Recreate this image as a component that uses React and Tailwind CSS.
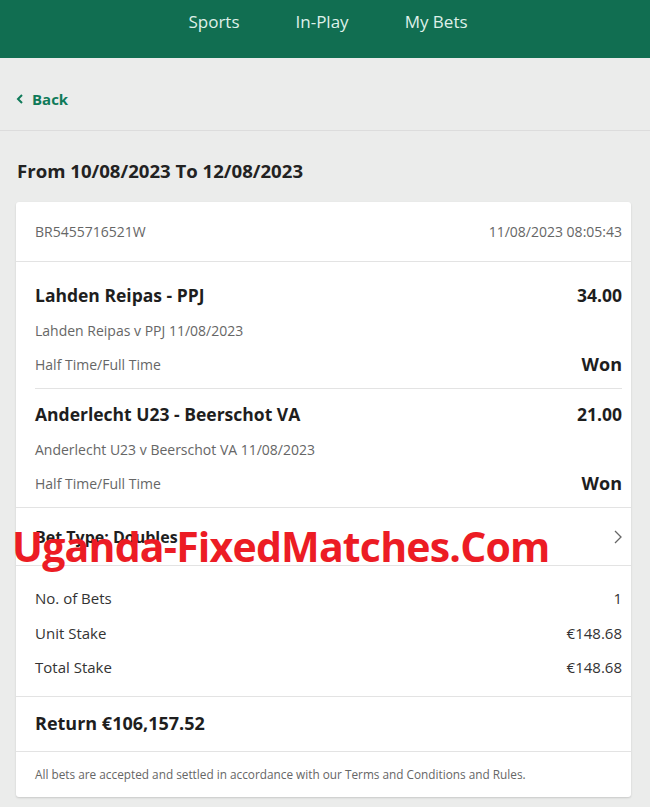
import React from "react";

const F = { fontFamily: '"Open Sans", "Noto Sans", sans-serif' };

function Row({ label, value }) {
  return (
    <div className="flex justify-between items-center h-[34.5px] text-[15px] text-[#333]">
      <span>{label}</span>
      <span>{value}</span>
    </div>
  );
}

function Selection({ title, odds, sub, border, top }) {
  return (
    <div className={"ml-[19px] mr-[9px] " + top + (border ? " border-b border-[#e3e3e3]" : "")}>
      <div className="flex justify-between items-center text-[17.5px] font-bold text-[#1e1e1e]">
        <span>{title}</span>
        <span>{odds}</span>
      </div>
      <div className="text-[14px] text-[#666] mt-[12px]">{sub}</div>
      <div className="flex justify-between items-center mt-[10px] pb-[10px]">
        <span className="text-[14px] text-[#666]">Half Time/Full Time</span>
        <span className="text-[18px] font-bold text-[#1e1e1e]">Won</span>
      </div>
    </div>
  );
}

export default function App() {
  return (
    <div style={F} className="w-[650px] min-h-[807px] bg-[#ebeceb] overflow-hidden">
      <div className="h-[58px] bg-[#116e51] flex justify-center items-start pt-[9px] pl-[6px] gap-[56px] text-[17px] text-[#dff0e9]">
        <span>Sports</span>
        <span>In-Play</span>
        <span>My Bets</span>
      </div>
      <div className="h-[73px] border-b border-[#dcdcdc] flex items-center pl-[16px] gap-[8px] text-[#0f7a59] font-bold text-[15px] pt-[10px]">
        <svg width="8" height="10" viewBox="0 0 8 10"><path d="M6 1 L2 5 L6 9" stroke="#0f7a59" strokeWidth="2" fill="none" /></svg>
        <span>Back</span>
      </div>
      <div className="px-[17px] pt-[26px] pb-[17px] text-[18.6px] font-bold text-[#222]">
        From 10/08/2023 To 12/08/2023
      </div>
      <div className="ml-[16px] mr-[19px] bg-white rounded-[3px] shadow-[0_1px_2px_rgba(0,0,0,0.15)]">
        <div className="h-[60px] border-b border-[#e3e3e3] flex justify-between items-center pl-[19px] pr-[9px] text-[14px] text-[#666]">
          <span>BR5455716521W</span>
          <span>11/08/2023 08:05:43</span>
        </div>
        <Selection title="Lahden Reipas - PPJ" odds="34.00" sub="Lahden Reipas v PPJ 11/08/2023" border top="pt-[20px]" />
        <Selection title="Anderlecht U23 - Beerschot VA" odds="21.00" sub="Anderlecht U23 v Beerschot VA 11/08/2023" top="pt-[12px]" />
        <div className="relative h-[59px] border-t border-b border-[#e3e3e3] flex justify-between items-center pl-[19px] pr-[9px] text-[16px] font-bold text-[#1e1e1e]">
          <span>Bet Type: Doubles</span>
          <svg width="8" height="14" viewBox="0 0 8 14"><path d="M1 1 L7 7 L1 13" stroke="#666" strokeWidth="1.3" fill="none" /></svg>
          <div className="absolute left-[-4px] top-[18px] text-[41px] font-bold text-[#ec1c24] leading-none tracking-[-0.8px] whitespace-nowrap">
            Uganda-FixedMatches.Com
          </div>
        </div>
        <div className="pl-[19px] pr-[9px] pt-[15px] pb-[11px] border-b border-[#e3e3e3]">
          <Row label="No. of Bets" value="1" />
          <Row label="Unit Stake" value="€148.68" />
          <Row label="Total Stake" value="€148.68" />
        </div>
        <div className="h-[55px] flex items-center pl-[19px] pr-[9px] border-b border-[#e3e3e3] text-[18px] font-bold text-[#1e1e1e]">
          Return €106,157.52
        </div>
        <div className="h-[45px] flex items-center pl-[19px] pr-[9px] text-[11.8px] text-[#666]">
          All bets are accepted and settled in accordance with our Terms and Conditions and Rules.
        </div>
      </div>
    </div>
  );
}
